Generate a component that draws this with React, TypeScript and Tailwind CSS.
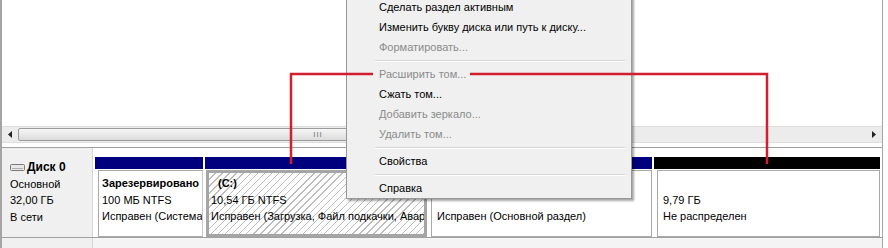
import React from "react";

const font = "font-['Liberation_Sans','Arial',sans-serif]";

function MenuItem({ label, disabled }: { label: string; disabled?: boolean }) {
  return (
    <div
      className={`h-[20px] leading-[20px] pl-[32px] whitespace-nowrap ${
        disabled ? "text-[#8b8b8b]" : "text-black"
      }`}
    >
      {label}
    </div>
  );
}

function Sep() {
  return (
    <div className="h-[7px] flex flex-col justify-center pl-[28px] pr-[6px]">
      <div className="h-px bg-[#d7d7d7]" />
      <div className="h-px bg-white" />
    </div>
  );
}

export default function App() {
  return (
    <div className={`relative w-[888px] h-[248px] bg-white overflow-hidden text-[11px] ${font}`}>
      <div className="w-[883px] h-[248px] flex flex-col border-l-2 border-r border-[#a5a5a5]">
        {/* top empty panel */}
        <div className="h-[126px] bg-white" />
        {/* scrollbar */}
        <div className="h-[17px] bg-[#ececec] border-y border-[#dedede] flex items-stretch">
          <div className="w-[16px] flex items-center justify-center">
            <svg width="4" height="7" viewBox="0 0 4 7">
              <path d="M4 0 L0 3.5 L4 7 Z" fill="#222" />
            </svg>
          </div>
          <div className="w-[600px] my-px rounded-[2px] border border-[#9c9c9c] bg-[linear-gradient(#f6f6f6,#dcdcdc)] flex items-center justify-center">
            <span className="text-[8px] leading-none text-[#777] tracking-[1px]">III</span>
          </div>
          <div className="flex-1" />
          <div className="w-[16px] flex items-center justify-center">
            <svg width="4" height="7" viewBox="0 0 4 7">
              <path d="M0 0 L4 3.5 L0 7 Z" fill="#222" />
            </svg>
          </div>
        </div>
        <div className="h-[5px] bg-white border-b border-[#a0a0a0]" />
        {/* disk row */}
        <div className="h-[89px] flex">
          <div className="w-[91px] bg-[#f0f0f0] border-r border-[#d6d6d6] pl-[8px] pt-[11px] leading-[16.5px] text-black">
            <div className="flex items-center gap-[1px]">
              <svg width="16" height="9" viewBox="0 0 16 9">
                <rect x="0.5" y="1.5" width="14" height="6" rx="1" fill="#e8e8e8" stroke="#7a7a7a" />
                <rect x="2" y="5" width="11" height="1" fill="#b0b0b0" />
              </svg>
              <span className="font-bold text-[12px]">Диск 0</span>
            </div>
            <div>Основной</div>
            <div>32,00 ГБ</div>
            <div>В сети</div>
          </div>
          <div className="flex-1 bg-white pl-[2px] pt-[9px] flex gap-[2px]">
            {/* p1 */}
            <div className="w-[108px] flex flex-col">
              <div className="h-[12px] bg-[#00007f]" />
              <div className="h-[67px] mt-px ml-[3px] border border-[#a9a9a9] border-r-[#c9c9c9] bg-white pl-[3px] pt-[4px] leading-[16.5px] overflow-hidden whitespace-nowrap">
                <div className="font-bold">Зарезервировано</div>
                <div>100 МБ NTFS</div>
                <div>Исправен (Система</div>
              </div>
            </div>
            {/* p2 */}
            <div className="w-[222px] flex flex-col">
              <div className="h-[12px] bg-[#00007f]" />
              <div className="h-[67px] mt-px ml-[1px] border-[3px] border-[#a5a5a5] bg-[repeating-linear-gradient(135deg,#ffffff_0px,#ffffff_4px,#bdbdbd_4px,#bdbdbd_5px)] pl-[2px] pt-[2px] leading-[16.5px] overflow-hidden whitespace-nowrap">
                <div className="font-bold pl-[7px]">(C:)</div>
                <div>10,54 ГБ NTFS</div>
                <div className="overflow-hidden">Исправен (Загрузка, Файл подкачки, Авар</div>
              </div>
            </div>
            {/* p3 */}
            <div className="w-[223px] flex flex-col">
              <div className="h-[12px] bg-[#00007f]" />
              <div className="h-[67px] mt-px ml-[2px] border border-[#a9a9a9] bg-white pl-[5px] pt-[4px] leading-[16.5px] overflow-hidden whitespace-nowrap">
                <div className="font-bold">&nbsp;</div>
                <div>&nbsp;</div>
                <div>Исправен (Основной раздел)</div>
              </div>
            </div>
            {/* p4 */}
            <div className="w-[226px] flex flex-col">
              <div className="h-[12px] bg-black" />
              <div className="h-[67px] mt-px ml-[3px] border border-[#a9a9a9] bg-white pl-[5px] pt-[4px] leading-[16.5px] overflow-hidden whitespace-nowrap">
                <div>&nbsp;</div>
                <div>9,79 ГБ</div>
                <div>Не распределен</div>
              </div>
            </div>
          </div>
        </div>
        {/* next row */}
        <div className="flex-1 flex border-t border-[#a0a0a0]">
          <div className="w-[91px] bg-[#f0f0f0] border-r border-[#d6d6d6]" />
          <div className="flex-1 bg-[#f4f4f4]" />
        </div>
      </div>

      {/* context menu */}
      <div className="absolute left-[346px] top-[-4px] w-[286px] bg-[#f0f0f0] border border-[#979797] shadow-[2px_2px_2px_rgba(0,0,0,0.35)]">
        <MenuItem label="Сделать раздел активным" />
        <MenuItem label="Изменить букву диска или путь к диску..." />
        <MenuItem label="Форматировать..." disabled />
        <Sep />
        <MenuItem label="Расширить том..." disabled />
        <MenuItem label="Сжать том..." />
        <MenuItem label="Добавить зеркало..." disabled />
        <MenuItem label="Удалить том..." disabled />
        <Sep />
        <MenuItem label="Свойства" />
        <Sep />
        <MenuItem label="Справка" />
      </div>

      {/* red annotation */}
      <svg className="absolute left-0 top-0 pointer-events-none" width="888" height="248">
        <path d="M291 164 V74 H373" fill="none" stroke="#d21f30" strokeWidth="2.5" />
        <path d="M470 74 H767 V164" fill="none" stroke="#d21f30" strokeWidth="2.5" />
      </svg>
    </div>
  );
}
